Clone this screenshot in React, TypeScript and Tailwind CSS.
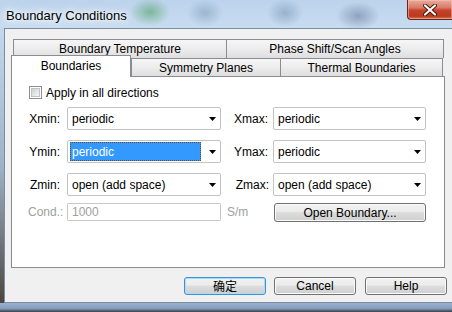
import React from "react";

function Arrow() {
  return (
    <svg width="7" height="4" viewBox="0 0 7 4" className="shrink-0">
      <polygon points="0,0 7,0 3.5,4" fill="#000" />
    </svg>
  );
}

function Combo({ value, w, focused }: { value: string; w: string; focused?: boolean }) {
  return (
    <div className={`${w} h-[23px] shrink-0 bg-white border border-[#c3c3c3] rounded-[2px] flex items-center pr-[4px]`}>
      {focused ? (
        <div className="flex-1 ml-[2px] mr-[8px] h-[19px] bg-[#3399ff] text-white border border-dotted border-[#6b4a22] flex items-center pl-[1px] leading-[14px]">
          {value}
        </div>
      ) : (
        <span className="flex-1 pl-[4px] leading-[14px]">{value}</span>
      )}
      <Arrow />
    </div>
  );
}

function Button({ label, w, isDefault, cjk }: { label: string; w: string; isDefault?: boolean; cjk?: boolean }) {
  return (
    <div
      className={`${w} h-[18px] shrink-0 rounded-[3px] border flex items-center justify-center leading-[14px] bg-[linear-gradient(#f2f2f2,#ebebeb_45%,#dddddd_50%,#cfcfcf)] ${
        isDefault
          ? "border-[#3c8fd8] shadow-[inset_0_0_0_1px_#a9ddf8]"
          : "border-[#707070] shadow-[inset_0_0_0_1px_#fbfbfb]"
      } ${cjk ? "font-['Noto_Sans_CJK_SC',sans-serif] text-[12px]" : ""}`}
    >
      {label}
    </div>
  );
}

function Tab({ label, w, h, selected, extra }: { label: string; w: string; h: string; selected?: boolean; extra?: string }) {
  return (
    <div
      className={`${w} ${h} shrink-0 border border-b-0 border-[#898c95] flex items-center justify-center leading-[14px] ${
        selected ? "bg-white" : "bg-[linear-gradient(#f6f6f6,#ececec_50%,#dedede)]"
      } ${extra ?? ""}`}
    >
      {label}
    </div>
  );
}

export default function App() {
  return (
    <div className="w-[452px] h-[312px] overflow-hidden flex flex-col font-['Liberation_Sans','Noto_Sans_CJK_SC',sans-serif] text-[12px] text-black bg-[#8ea7c6]">
      {/* Title bar */}
      <div className="h-[28px] shrink-0 flex items-start justify-between bg-[radial-gradient(ellipse_20px_14px_at_150px_12px,rgba(80,160,100,0.6),transparent),radial-gradient(ellipse_18px_14px_at_205px_13px,rgba(120,150,180,0.5),transparent),radial-gradient(ellipse_18px_14px_at_285px_13px,rgba(110,140,175,0.5),transparent),radial-gradient(ellipse_22px_14px_at_358px_16px,rgba(100,120,150,0.55),transparent),linear-gradient(#bcd3ec,#c8dcf0)]">
        <span className="pl-[6px] pt-[8px] text-[13px] leading-[15px] [text-shadow:0_0_5px_#fff,0_0_9px_#fff,0_0_12px_#fff]">
          Boundary Conditions
        </span>
        <div className="w-[45px] h-[20px] shrink-0 rounded-bl-[4px] border border-t-0 border-r-0 border-[#6b2418] bg-[linear-gradient(#e9ab9c,#d87b66_40%,#c7412a_55%,#b93a1f_85%,#d77a52)] shadow-[inset_0_0_0_1px_rgba(255,200,190,0.5)] flex items-center justify-center">
          <svg width="14" height="12" viewBox="0 0 14 12">
            <path d="M2 1.5 L12 10.5 M12 1.5 L2 10.5" stroke="#4a1208" strokeWidth="4" strokeLinecap="round" />
            <path d="M2 1.5 L12 10.5 M12 1.5 L2 10.5" stroke="#ffffff" strokeWidth="2.2" strokeLinecap="round" />
          </svg>
        </div>
      </div>

      {/* Middle */}
      <div className="h-[275px] shrink-0 flex">
        <div className="w-[4px] shrink-0 bg-[linear-gradient(#c4d8ed,#9eb3c8_50%,#4b4540)]" />
        <div className="w-[449px] shrink-0 border border-[#7c8da3] bg-[#f0f0f0] flex flex-col">
          {/* Tab control */}
          <div className="ml-[6px] mt-[10px] w-[434px] flex flex-col">
            <div className="flex pl-[2px] h-[19px]">
              <Tab label="Boundary Temperature" w="w-[214px]" h="h-[19px]" />
              <Tab label="Phase Shift/Scan Angles" w="w-[218px]" h="h-[19px]" extra="-ml-px" />
            </div>
            <div className="flex items-end h-[21px] -mt-[3px] relative z-10">
              <Tab label="Boundaries" w="w-[120px]" h="h-[22px]" selected extra="-mb-px pb-[1px]" />
              <Tab label="Symmetry Planes" w="w-[150px]" h="h-[18px]" />
              <Tab label="Thermal Boundaries" w="w-[163px]" h="h-[18px]" extra="-ml-px" />
            </div>
            <div className="h-[192px] bg-white border border-[#898c95] flex flex-col">
              <div className="mt-[9px] h-[13px] pl-[17px] flex items-center gap-[4px]">
                <div className="w-[13px] h-[13px] border border-[#8e8f8f] bg-white p-[1px]">
                  <div className="w-full h-full border border-[#c2c2c2] bg-[linear-gradient(135deg,#cdd0d4,#f6f6f6)]" />
                </div>
                <span className="leading-[14px]">Apply in all directions</span>
              </div>

              <div className="mt-[8px] flex items-center h-[23px]">
                <div className="w-[55px] shrink-0 text-right pr-[7px]">Xmin:</div>
                <Combo value="periodic" w="w-[154px]" />
                <div className="w-[52px] shrink-0 text-right pr-[5px]">Xmax:</div>
                <Combo value="periodic" w="w-[153px]" />
              </div>
              <div className="mt-[10px] flex items-center h-[23px]">
                <div className="w-[55px] shrink-0 text-right pr-[7px]">Ymin:</div>
                <Combo value="periodic" w="w-[154px]" focused />
                <div className="w-[52px] shrink-0 text-right pr-[5px]">Ymax:</div>
                <Combo value="periodic" w="w-[153px]" />
              </div>
              <div className="mt-[10px] flex items-center h-[23px]">
                <div className="w-[55px] shrink-0 text-right pr-[7px]">Zmin:</div>
                <Combo value="open (add space)" w="w-[154px]" />
                <div className="w-[52px] shrink-0 text-right pr-[4px]">Zmax:</div>
                <Combo value="open (add space)" w="w-[153px]" />
              </div>
              <div className="mt-[7px] flex items-start h-[19px]">
                <div className="w-[55px] shrink-0 pl-[16px] h-[18px] flex items-center text-[#a0a0a0]">Cond.:</div>
                <div className="w-[154px] h-[18px] shrink-0 border border-[#c9c9c9] rounded-[1px] bg-white flex items-center pl-[4px] text-[#a0a0a0] leading-[14px]">
                  1000
                </div>
                <div className="w-[53px] shrink-0 pl-[6px] h-[18px] flex items-center text-[#a0a0a0]">S/m</div>
                <div className="w-[152px] h-[19px] shrink-0 rounded-[3px] border border-[#707070] shadow-[inset_0_0_0_1px_#fbfbfb] bg-[linear-gradient(#f2f2f2,#ebebeb_45%,#dddddd_50%,#cfcfcf)] flex items-center justify-center leading-[14px]">
                  Open Boundary...
                </div>
              </div>
            </div>
          </div>

          {/* Buttons */}
          <div className="mt-[9px] flex justify-end pr-[5px]">
            <Button label="确定" w="w-[82px]" isDefault cjk />
            <div className="w-[8px] shrink-0" />
            <Button label="Cancel" w="w-[82px]" />
            <div className="w-[9px] shrink-0" />
            <Button label="Help" w="w-[82px]" />
          </div>
        </div>
      </div>

      {/* Bottom frame */}
      <div className="flex-1 bg-[linear-gradient(#9ab1cd,#869fbf_60%,#3a3d44)]" />
    </div>
  );
}
